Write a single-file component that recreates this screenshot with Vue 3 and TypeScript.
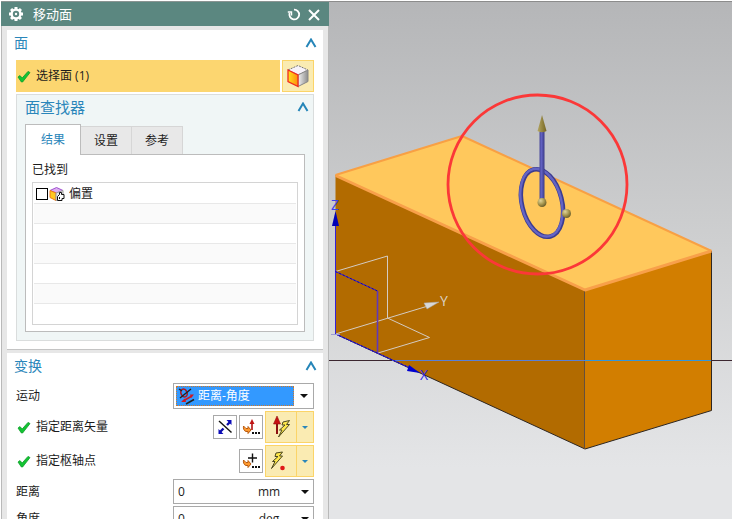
<script setup lang="ts">
import { ref } from 'vue'

type TabId = 'result' | 'settings' | 'reference'

const tabs: { id: TabId; label: string }[] = [
  { id: 'result', label: '结果' },
  { id: 'settings', label: '设置' },
  { id: 'reference', label: '参考' },
]
const activeTab = ref<TabId>('result')
const offsetChecked = ref(false)
const motion = ref('distance-angle')
const fields = ref([
  { id: 'distance', label: '距离', value: '0', unit: 'mm' },
  { id: 'angle', label: '角度', value: '0', unit: 'deg' },
])
</script>

<template>
  <div class="app">
    <aside class="panel">
      <header class="bar">
        <svg class="gear" width="16" height="16" viewBox="0 0 16 16">
          <g fill="#fff">
            <rect v-for="a in [0, 45, 90, 135]" :key="a" x="6.5" y="1" width="3" height="14" :transform="`rotate(${a} 8 8)`" />
            <circle cx="8" cy="8" r="5.6" />
          </g>
          <circle cx="8" cy="8" r="3.2" fill="#5b8780" />
          <circle cx="8" cy="8" r="1.2" fill="#fff" />
        </svg>
        <h1>移动面</h1>
        <button class="bar-btn" aria-label="重置">
          <svg width="14" height="14" viewBox="0 0 14 14" fill="none" stroke="#fff" stroke-width="1.8">
            <path d="M7 2.6A4.900 4.900 0 1 1 2.600 6" />
            <path d="M.8 5H4.500V8.500" stroke-width="1.4" />
          </svg>
        </button>
        <button class="bar-btn" aria-label="关闭">
          <svg width="14" height="14" viewBox="0 0 14 14" fill="none" stroke="#fff" stroke-width="2">
            <path d="M2 3L12 13M12 3L2 13" />
          </svg>
        </button>
      </header>

      <div class="body">
        <section class="group">
          <div class="head">
            <h2>面</h2>
            <button class="fold" aria-label="收起面">
              <svg width="12" height="10" viewBox="0 0 12 10"><path d="M1.5 9L6 1.500L10.500 9" /></svg>
            </button>
          </div>
          <div class="pick">
            <div class="pick-label">
              <svg class="check" width="14" height="13" viewBox="0 0 14 13"><path d="M1 7L3 5.6L5.2 8L11 1.4L13 2.6L5.6 12H4.4Z" /></svg>
              <span>选择面 (1)</span>
            </div>
            <button class="cube" aria-label="选择面">
              <svg width="24" height="24" viewBox="0 0 24 24">
                <defs>
                  <linearGradient id="cubeFront"><stop offset="0" stop-color="#ffe21c" /><stop offset="1" stop-color="#ff8c10" /></linearGradient>
                  <linearGradient id="cubeSide"><stop offset="0" stop-color="#f2f2f2" /><stop offset="1" stop-color="#8c8c8c" /></linearGradient>
                </defs>
                <path d="M2 6L12 1.5L22 6L12 11Z" fill="#f7f2fa" stroke="#777" stroke-dasharray="2 1" />
                <path d="M12 11L22 6V17.5L12 22.5Z" fill="url(#cubeSide)" stroke="#888" />
                <path d="M2 6L12 11V22.5L2 17.5Z" fill="url(#cubeFront)" stroke="#f02a20" stroke-width="1.3" />
              </svg>
            </button>
          </div>

          <div class="finder">
            <div class="head finder-head">
              <h3>面查找器</h3>
              <button class="fold" aria-label="收起面查找器">
                <svg width="12" height="10" viewBox="0 0 12 10"><path d="M1.5 9L6 1.5L10.5 9" /></svg>
              </button>
            </div>
            <div class="tabs" role="tablist">
              <button
                v-for="t in tabs"
                :key="t.id"
                role="tab"
                class="tab"
                :class="{ active: activeTab === t.id }"
                :aria-selected="activeTab === t.id"
                @click="activeTab = t.id"
              >{{ t.label }}</button>
            </div>
            <div class="tab-body">
              <p>已找到</p>
              <ul class="list">
                <li>
                  <label class="item">
                    <input v-model="offsetChecked" type="checkbox" />
                    <svg width="16" height="16" viewBox="0 0 16 16">
                      <path d="M1 4.500L7.500 1.500L14 4.500L7.500 7Z" fill="#dcaef0" stroke="#a050d0" />
                      <path d="M1 4.500L7 7V14.500L1 11.500Z" fill="#ffc820" stroke="#f07818" />
                      <path d="M7 7L14 4.500V11L7 14.500Z" fill="#e6e6e6" stroke="#999" />
                      <path d="M8.500 14.500V10.500L10.500 8.500V6.500H12.500V8.500H15V12.500H13V14.500Z" fill="#fff" stroke="#111" />
                      <path d="M10.500 11V13" fill="none" stroke="#111" />
                    </svg>
                    <span>偏置</span>
                  </label>
                </li>
                <li v-for="n in 6" :key="n"></li>
              </ul>
            </div>
          </div>
        </section>

        <section class="group">
          <div class="head">
            <h2>变换</h2>
            <button class="fold" aria-label="收起变换">
              <svg width="12" height="10" viewBox="0 0 12 10"><path d="M1.5 9L6 1.5L10.5 9" /></svg>
            </button>
          </div>
          <div class="rows">
            <div class="row">
              <label for="motion">运动</label>
              <div class="box combo">
                <div class="chosen">
                  <svg width="18" height="18" viewBox="0 0 18 18" fill="none">
                    <ellipse cx="6" cy="6" rx="3" ry="4" stroke="#b01822" stroke-width="1.6" transform="rotate(-25 6 6)" />
                    <path d="M1 2L4 4M2 11L13 2" stroke="#222" stroke-width="1.4" />
                    <path d="M5 14L14 9" stroke="#d01820" stroke-width="1.8" />
                    <path d="M3 15L7 11.5L8 15ZM12 7.500L16 7.500L13 11Z" fill="#d01820" />
                    <path d="M8 17L16 12.500" stroke="#222" stroke-width="1.5" />
                  </svg>
                  <select id="motion" v-model="motion">
                    <option value="distance-angle">距离-角度</option>
                    <option value="distance">距离</option>
                    <option value="angle">角度</option>
                  </select>
                </div>
                <span class="arrow"></span>
              </div>
            </div>

            <div class="row tall">
              <span class="step">
                <svg class="check" width="14" height="13" viewBox="0 0 14 13"><path d="M1 7L3 5.6L5.2 8L11 1.4L13 2.6L5.6 12H4.4Z" /></svg>
                指定距离矢量
              </span>
              <button class="tool" aria-label="反向">
                <svg width="18" height="18" viewBox="0 0 18 18">
                  <path d="M3 3L15.5 14.500" stroke="#111" stroke-width="1.4" />
                  <path d="M4 14L7.500 10.500M11 7L14 4" stroke="#0c0ca8" stroke-width="2.400" />
                  <path d="M2.500 16V11L7.500 16ZM15.500 2V7L10.500 2Z" fill="#0c0cb8" />
                </svg>
              </button>
              <button class="tool" aria-label="矢量对话框">
                <svg width="18" height="18" viewBox="0 0 18 18">
                  <path d="M10 12V4" stroke="#b01010" stroke-width="1.6" />
                  <path d="M10 1L12.5 6H7.5Z" fill="#c01414" />
                  <path d="M1.5 8L4 10.5H6V8.500L9 12L6 15.5V13.5H4C2 13 1 10.5 1.5 8Z" fill="#ff9a2e" stroke="#b85a10" />
                  <path d="M10 14h2v2h-2zM13 14h2v2h-2zM16 14h2v2h-2z" fill="#111" />
                </svg>
              </button>
              <div class="split">
                <button class="split-main" aria-label="自动判断的矢量">
                  <svg width="26" height="26" viewBox="0 0 26 26">
                    <path d="M9 20V8" stroke="#8c1010" stroke-width="2" />
                    <path d="M9 2L12.5 10H5.5Z" fill="#c81010" stroke="#901010" stroke-width=".6" />
                    <path d="M15 8L21.500 6.500L18.500 10.500H21.500L10.500 23L14 16H11.500L17 11H14Z" fill="#ffe84a" stroke="#4c4820" />
                  </svg>
                </button>
                <button class="split-more" aria-label="更多矢量类型"><span class="arrow small"></span></button>
              </div>
            </div>

            <div class="row tall">
              <span class="step">
                <svg class="check" width="14" height="13" viewBox="0 0 14 13"><path d="M1 7L3 5.6L5.2 8L11 1.4L13 2.6L5.6 12H4.4Z" /></svg>
                指定枢轴点
              </span>
              <button class="tool" aria-label="点对话框">
                <svg width="18" height="18" viewBox="0 0 18 18">
                  <path d="M10.5 1.500V10.500M6 6H15" stroke="#111" stroke-width="1.4" />
                  <path d="M1.5 8L4 10.5H6V8.5L9 12L6 15.5V13.5H4C2 13 1 10.5 1.5 8Z" fill="#ff9a2e" stroke="#b85a10" />
                  <path d="M10 14h2v2h-2zM13 14h2v2h-2zM16 14h2v2h-2z" fill="#111" />
                </svg>
              </button>
              <div class="split">
                <button class="split-main" aria-label="自动判断的点">
                  <svg width="26" height="26" viewBox="0 0 26 26">
                    <path d="M8 5L14.500 4L11.500 8H14.500L3.500 20.500L7 13.500H4.500L10 8.500H7Z" fill="#ffe84a" stroke="#4c4820" />
                    <circle cx="14.5" cy="20" r="2.300" fill="#e01818" />
                  </svg>
                </button>
                <button class="split-more" aria-label="更多点类型"><span class="arrow small"></span></button>
              </div>
            </div>

            <div v-for="f in fields" :key="f.id" class="row">
              <label :for="f.id">{{ f.label }}</label>
              <div class="box field">
                <input :id="f.id" v-model="f.value" type="text" />
                <span class="unit">{{ f.unit }}</span>
                <button class="more" :aria-label="f.label + '选项'"><span class="arrow"></span></button>
              </div>
            </div>
          </div>
        </section>
      </div>
    </aside>

    <main class="view">
      <svg class="scene" viewBox="329 2 403 517" preserveAspectRatio="xMidYMin slice">
        <defs>
          <radialGradient id="ball" cx=".35" cy=".3" r=".8">
            <stop offset="0" stop-color="#e0d49a" /><stop offset=".5" stop-color="#a89850" /><stop offset="1" stop-color="#5c5020" />
          </radialGradient>
          <linearGradient id="cone"><stop offset="0" stop-color="#b4a662" /><stop offset="1" stop-color="#756522" /></linearGradient>
          <linearGradient id="shaft"><stop offset="0" stop-color="#47479c" /><stop offset=".4" stop-color="#6060c0" /><stop offset="1" stop-color="#3a3a88" /></linearGradient>
        </defs>
        <path d="M335.5 175L585 290V449L335.5 334Z" fill="#b26b00" />
        <path d="M585 290L711.5 251V410.5L585 449Z" fill="#d27e00" />
        <path d="M335.5 175L462 136L711.5 251L585 290Z" fill="#ffc85c" />
        <path d="M335.5 334L585 449L711.5 410.5V251" fill="none" stroke="#2e2620" />
        <path d="M584.5 290V449" stroke="#65503c" />
        <path d="M335.5 175L462 136L711.5 251" fill="none" stroke="#f8a044" stroke-width="2" stroke-linejoin="round" />
        <path d="M335.5 175.5L585 290L711.5 251" fill="none" stroke="#f8a04a" stroke-width="3" stroke-linejoin="round" />

        <path d="M329 360.5H392M711 360.5H732" stroke="#3c2630" />
        <path d="M392 360.5H585" stroke="#5880d8" />
        <path d="M585 360.5H711" stroke="#3296dc" />

        <path d="M335.5 271.5L387.5 256V318L429.5 337.5L378 353M335.5 334L428 306" fill="none" stroke="#d4cbc2" />
        <path d="M424 303L439 302L427 309Z" fill="#d8d8d8" stroke="#a8a8a8" stroke-width=".5" />
        <path d="M335.5 334V224M335.5 271.5L377.5 291" fill="none" stroke="#3520d8" />
        <path d="M377.5 291V353" stroke="#6038b8" stroke-width="1.6" />
        <path d="M335.5 334L410 368" stroke="#3828e0" />
        <path d="M335.5 271.5L377.5 291M335.5 334L410 368" fill="none" stroke="#1400a8" stroke-dasharray="2 2" />
        <path d="M335.5 211L339 226H332Z" fill="#0000b8" />
        <path d="M409 365L420 373L407 371Z" fill="#0000d0" />
        <path d="M331 334.5H340" stroke="#9a9ad8" />
        <g class="axis">
          <text x="335" y="210" fill="#4040e8">Z</text>
          <text x="444" y="306" fill="#dcd2c4">Y</text>
          <text x="424" y="380" fill="#3028e0">X</text>
        </g>

        <ellipse cx="542" cy="203" rx="20" ry="34.5" transform="rotate(-14 542 203)" fill="none" stroke="#3c3c90" stroke-width="4.5" />
        <ellipse cx="541.5" cy="202.5" rx="20" ry="34.5" transform="rotate(-14 542 203)" fill="none" stroke="#6464c4" stroke-width="2.4" />
        <path d="M539.5 132H544.5V201H539.5Z" fill="url(#shaft)" />
        <path d="M542 115L546.5 131Q542 133.5 537.5 131Z" fill="url(#cone)" />
        <circle cx="542" cy="202.5" r="4.5" fill="url(#ball)" />
        <circle cx="566.5" cy="213.5" r="4.5" fill="url(#ball)" />
        <circle cx="537.5" cy="184.5" r="89.5" fill="none" stroke="#fb3838" stroke-width="2.8" />
      </svg>
    </main>
  </div>
</template>

<style>
body {
  margin: 0;
  background: #fff;
}
</style>

<style scoped>
* {
  box-sizing: border-box;
}

.app {
  display: flex;
  height: 100vh;
  padding: 1px 1px 0;
  overflow: hidden;
  color: #1c1c1c;
  font: 12px/16px "Open Sans", "Noto Sans CJK SC", sans-serif;
}

h1, h2, h3, p, ul {
  margin: 0;
  padding: 0;
  font-weight: 400;
}

button {
  display: flex;
  align-items: center;
  justify-content: center;
  margin: 0;
  padding: 0;
  border: 0;
  background: none;
  color: inherit;
  font: inherit;
}

svg {
  flex: none;
  display: block;
}

.panel {
  display: flex;
  flex-direction: column;
  flex: none;
  width: 328px;
}

.bar {
  display: flex;
  flex: none;
  align-items: center;
  gap: 6px;
  height: 25px;
  padding: 0 8px 0 7px;
  border-top: 1px solid #8a9492;
  background: #5b8780;
  color: #fff;
}

.bar h1 {
  flex: 1;
  padding-left: 3px;
  font-size: 13px;
}

.body {
  display: flex;
  flex: 1;
  flex-direction: column;
  gap: 3px;
  min-height: 0;
  padding: 4px 5px 0;
  border: solid #b9b9b9;
  border-width: 0 1px;
  background: #e7e7e7;
}

.group {
  flex: none;
  padding: 0 9px 8px;
  border-bottom: 1px solid #c4c4c4;
  background: #fff;
}

.head {
  display: flex;
  align-items: center;
  justify-content: space-between;
  height: 30px;
  margin: 0 -3px 0 -2px;
  padding-bottom: 4px;
  color: #2a86ba;
}

.head h2 {
  font-size: 14px;
}

.head h3 {
  font-size: 15px;
}

.fold path {
  fill: none;
  stroke: #2585b8;
  stroke-width: 2;
}

.pick {
  display: flex;
  gap: 2px;
  height: 32px;
}

.pick-label {
  display: flex;
  flex: 1;
  align-items: center;
  gap: 5px;
  padding-left: 1px;
  background: #fcd670;
}

.check {
  fill: #12c432;
  stroke: #0c9c28;
  stroke-width: .8;
}

.cube {
  width: 32px;
  border: 1px solid #fbd468;
  background: #faebb2;
}

.finder {
  margin-top: 2px;
  padding: 0 8px 8px;
  border: 1px solid #dadddd;
  background: #f0f6f6;
}

.finder-head {
  height: 29px;
  margin: 0 -4px 0 0;
  padding-bottom: 6px;
}

.tabs {
  display: flex;
  align-items: flex-end;
}

.tab {
  width: 51px;
  height: 28px;
  border: 1px solid #d6d6d6;
  border-bottom: 0;
  border-left: 0;
  background: #e8e8e8;
}

.tab.active {
  position: relative;
  width: 56px;
  height: 31px;
  margin-bottom: -1px;
  border: 1px solid #bcbcbc;
  border-bottom: 0;
  background: #fff;
  color: #2a86ba;
}

.tab-body {
  padding: 7px 6px 6px;
  border: 1px solid #bcbcbc;
  background: #fff;
}

.list {
  margin-top: 4px;
  padding: 1px 1px 0;
  border: 1px solid #d4d4d4;
  list-style: none;
}

.list li {
  height: 20px;
  border-bottom: 1px solid #e8e8e8;
}

.list li:nth-child(even) {
  background: #fafafa;
}

.list li:last-child {
  border-bottom: 0;
}

.item {
  display: flex;
  align-items: center;
  gap: 1px;
  height: 20px;
  padding-left: 2px;
}

.item span {
  padding-left: 3px;
}

.item input {
  appearance: none;
  width: 12px;
  height: 12px;
  margin: 0;
  border: 1px solid #000;
  background: #fff;
}

.item input:checked {
  background: #2a86ba;
}

.rows {
  display: grid;
  gap: 2px;
}

.row {
  display: flex;
  align-items: center;
  gap: 2px;
}

.row label,
.step {
  flex: 1;
}

.tall {
  height: 32px;
}

.step {
  display: flex;
  align-items: center;
  gap: 5px;
  padding-left: 1px;
}

.box {
  display: flex;
  align-items: center;
  width: 141px;
  height: 25px;
  border: 1px solid #a9a9a9;
  background: #fff;
}

.combo {
  height: 26px;
  padding: 2px;
}

.chosen {
  display: flex;
  flex: 1;
  align-items: center;
  align-self: stretch;
  min-width: 0;
  padding-left: 1px;
  border: 1px dotted #d07828;
  background: #3399ff;
}

.chosen select {
  flex: 1;
  appearance: none;
  min-width: 0;
  padding: 0 0 0 2px;
  border: 0;
  outline: 0;
  background: transparent;
  color: #fff;
  font: inherit;
}

.arrow {
  flex: none;
  width: 0;
  margin: 0 3px 0 6px;
  border: 4px solid transparent;
  border-top-color: #111;
  border-bottom: 0;
}

.arrow.small {
  margin: 0;
  border-width: 3px 3px 0;
  border-top-color: #2a86ba;
}

.tool {
  width: 24px;
  height: 24px;
  border: 1px solid #a9a9a9;
  background: #fff;
}

.split {
  display: flex;
  width: 49px;
  height: 32px;
  border: 1px solid #fbd468;
  background: #faebb2;
}

.split-main {
  flex: 1;
}

.split-more {
  width: 17px;
  border-left: 1px solid #fbd468;
}

.field input {
  flex: 1;
  min-width: 0;
  padding: 0 0 0 4px;
  border: 0;
  outline: 0;
  background: transparent;
  color: inherit;
  font: inherit;
}

.unit {
  width: 34px;
  margin-right: 11px;
  text-align: center;
}

.more .arrow {
  margin: 0 4px;
}

.view {
  flex: 1;
  min-width: 0;
  border-top: 1px solid #8c8c8c;
  background: linear-gradient(#b5b6b8, #cfd0d1 48%, #e4e5e7 90%);
}

.scene {
  width: 100%;
  height: 100%;
}

.axis text {
  font-family: "Open Sans", sans-serif;
  font-size: 14px;
  text-anchor: middle;
}
</style>
